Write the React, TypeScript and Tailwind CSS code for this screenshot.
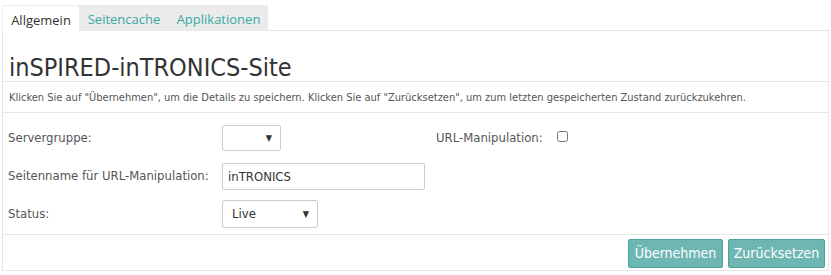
import { useState } from "react";

const tabs = [
  { label: "Allgemein", w: "w-[77px]" },
  { label: "Seitencache", w: "w-[90px]" },
  { label: "Applikationen", w: "w-[99px]" },
];

function Caret() {
  return <span className="text-[9px] leading-none text-[#333]">▼</span>;
}

export default function App() {
  const [active] = useState(0);
  const [urlManip, setUrlManip] = useState(false);
  const [siteName, setSiteName] = useState("inTRONICS");

  return (
    <div
      className="w-[831px] h-[275px] bg-white pt-[5px] px-[2px] text-[#555]"
      style={{ fontFamily: "Tahoma, 'DejaVu Sans Condensed', 'DejaVu Sans', sans-serif" }}
    >
      <div className="flex h-[26px] border-b border-[#e6e6e6] font-['Open_Sans',sans-serif]">
        {tabs.map((t, i) => (
          <div
            key={t.label}
            className={
              i === active
                ? `${t.w} h-[27px] pt-[5px] text-center text-[13px] text-[#333] bg-white border-l border-t border-[#ececec]`
                : `${t.w} h-[26px] pt-[5px] text-center text-[13px] text-[#3aa9a5] bg-[#ebebeb]`
            }
          >
            {t.label}
          </div>
        ))}
      </div>

      <div className="border-x border-b border-[#e6e6e6] w-[827px]">
        <div className="h-[51px] border-b border-[#e6e6e6] px-[6px] pt-[23px] text-[25px] leading-[28px] text-[#333]">
          inSPIRED-inTRONICS-Site
        </div>
        <div className="h-[31px] border-b border-[#e6e6e6] px-[6px] pt-[9px] text-[11px] leading-[14px] text-[#555]">
          Klicken Sie auf "Übernehmen", um die Details zu speichern. Klicken Sie auf "Zurücksetzen", um zum letzten
          gespeicherten Zustand zurückzukehren.
        </div>

        <div className="h-[122px] border-b border-[#e6e6e6] px-[5px] pt-[6px] text-[13px]">
          <div className="grid grid-cols-[214px_214px_121px_auto] grid-rows-[38px_38px_38px] items-center">
            <div>Servergruppe:</div>
            <div>
              <div className="w-[59px] h-[26px] border border-[#ccc] rounded-[2px] bg-white flex items-center justify-end pr-[8px]">
                <Caret />
              </div>
            </div>
            <div>URL-Manipulation:</div>
            <div>
              <input
                type="checkbox"
                checked={urlManip}
                onChange={(e) => setUrlManip(e.target.checked)}
                className="w-[11px] h-[11px] mt-[2px] accent-[#888]"
              />
            </div>

            <div>Seitenname für URL-Manipulation:</div>
            <div className="col-span-3">
              <input
                value={siteName}
                onChange={(e) => setSiteName(e.target.value)}
                className="w-[203px] h-[27px] border border-[#ccc] rounded-[2px] px-[5px] text-[13px] text-[#333] outline-none"
              />
            </div>

            <div>Status:</div>
            <div className="col-span-3">
              <div className="w-[96px] h-[28px] border border-[#ccc] rounded-[2px] bg-white flex items-center justify-between pl-[9px] pr-[8px] text-[#333]">
                <span>Live</span>
                <Caret />
              </div>
            </div>
          </div>
        </div>

        <div className="h-[35px] flex justify-end items-center gap-[5px] pr-[3px] pt-[1px]">
          <button className="h-[29px] w-[95px] rounded-[2px] border border-[#4aa39d] bg-[#6db6b1] text-white text-[14px]">
            Übernehmen
          </button>
          <button className="h-[29px] w-[97px] rounded-[2px] border border-[#4aa39d] bg-[#6db6b1] text-white text-[14px]">
            Zurücksetzen
          </button>
        </div>
      </div>
    </div>
  );
}
